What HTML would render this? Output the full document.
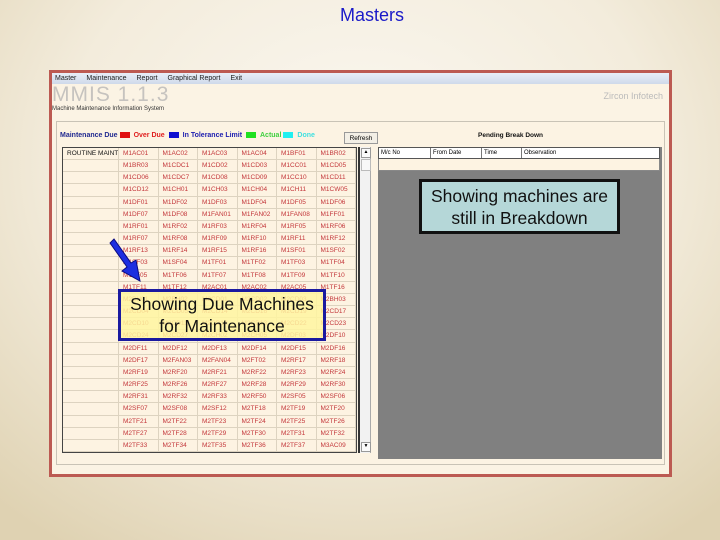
<!DOCTYPE html>
<html><head><meta charset="utf-8"><style>
*{margin:0;padding:0;box-sizing:border-box}
body{width:720px;height:540px;overflow:hidden;position:relative;font-family:"Liberation Sans",sans-serif;
background:radial-gradient(ellipse 75% 85% at 50% 30%,#fbf8f1 0%,#f3ecdc 55%,#dfd2b2 100%),#e6dcc0}
.abs{position:absolute}
#title{left:0;width:744px;top:5px;text-align:center;color:#1a1ac8;font-size:18px}
#frame{left:49px;top:70px;width:623px;height:407px;border:3px solid #bc5a52;background:#fbf3e4}
#menu{left:0;top:0;width:617px;height:11px;background:linear-gradient(#e8eef8,#cfd9ea);font-size:7px;color:#222;line-height:11px;padding-left:3px}
#menu span{margin-right:10px}
#mmis{left:0;top:10px;font-size:21px;color:#c6c3bf;letter-spacing:1px}
#sub{left:0;top:33px;font-size:6px;color:#333}
#zircon{right:6px;top:18px;font-size:9px;color:#bbb}
#panel{left:4px;top:48px;width:609px;height:344px;border:1px solid #c9c3b6;background:#fcf3e3}
#legend{left:8px;top:59px;font-size:7px;font-weight:bold;white-space:nowrap}
.sw{display:inline-block;width:10px;height:6px;vertical-align:middle;margin:0 4px 0 2px}
#refresh{left:292px;top:59px;width:34px;height:12px;border:1px solid #999;background:#f3efe6;font-size:6.5px;text-align:center;line-height:11px}
#grid{left:10px;top:74px;width:295px;height:306px;border:1px solid #444;display:grid;grid-template-rows:repeat(25,1fr);grid-template-columns:56px repeat(6,1fr);background:#fdf3e2}
#grid div{border-right:1px solid #ddd3c0;border-bottom:1px solid #ddd3c0;font-size:6.5px;color:#c3363a;padding-left:4px;line-height:11px;white-space:nowrap;overflow:hidden}
#grid div.h{color:#111}
#scroll{left:306px;top:74px;width:13px;height:306px;background:#f2f2f2;border-left:2px solid #333;border-right:1px solid #aaa}
#right{left:326px;top:74px;width:284px;height:312px;background:#808080}
#rh{left:0;top:0;width:282px;height:12px;background:#fff;border:1px solid #555;font-size:6px;line-height:11px;display:flex}
#rh span{border-right:1px solid #777;padding-left:2px}
#rb{left:0;top:12px;width:282px;height:12px;background:#fdf3e2;border:1px solid #888;border-top:none}
#pend{left:426px;top:59px;font-size:6.5px;font-weight:bold;color:#111}
.call{text-align:center;font-size:17.5px;color:#111;line-height:22px;white-space:nowrap}
</style></head><body>
<div id="title" class="abs">Masters</div>
<div id="frame" class="abs">
 <div id="menu" class="abs"><span>Master</span><span>Maintenance</span><span>Report</span><span>Graphical Report</span><span>Exit</span></div>
 <div id="mmis" class="abs">MMIS 1.1.3</div>
 <div id="sub" class="abs">Machine Maintenance Information System</div>
 <div id="zircon" class="abs">Zircon Infotech</div>
 <div id="panel" class="abs"></div>
 <div id="legend" class="abs"><span style="color:#222a90">Maintenance Due</span><span class="sw" style="background:#e01010"></span><span style="color:#e02020">Over Due</span> <span class="sw" style="background:#1010d0"></span><span style="color:#2020b0">In Tolerance Limit</span> <span class="sw" style="background:#20e020"></span><span style="color:#40d040">Actual</span><span class="sw" style="background:#20f0f0"></span><span style="color:#40e0e0">Done</span></div>
 <div id="refresh" class="abs">Refresh</div>
 <div id="pend" class="abs">Pending Break Down</div>
 <div id="grid" class="abs">
<div class="h">ROUTINE MAINT</div><div>M1AC01</div><div>M1AC02</div><div>M1AC03</div><div>M1AC04</div><div>M1BF01</div><div>M1BR02</div>
<div></div><div>M1BR03</div><div>M1CDC1</div><div>M1CD02</div><div>M1CD03</div><div>M1CC01</div><div>M1CD05</div>
<div></div><div>M1CD06</div><div>M1CDC7</div><div>M1CD08</div><div>M1CD09</div><div>M1CC10</div><div>M1CD11</div>
<div></div><div>M1CD12</div><div>M1CH01</div><div>M1CH03</div><div>M1CH04</div><div>M1CH11</div><div>M1CW05</div>
<div></div><div>M1DF01</div><div>M1DF02</div><div>M1DF03</div><div>M1DF04</div><div>M1DF05</div><div>M1DF06</div>
<div></div><div>M1DF07</div><div>M1DF08</div><div>M1FAN01</div><div>M1FAN02</div><div>M1FAN08</div><div>M1FF01</div>
<div></div><div>M1RF01</div><div>M1RF02</div><div>M1RF03</div><div>M1RF04</div><div>M1RF05</div><div>M1RF06</div>
<div></div><div>M1RF07</div><div>M1RF08</div><div>M1RF09</div><div>M1RF10</div><div>M1RF11</div><div>M1RF12</div>
<div></div><div>M1RF13</div><div>M1RF14</div><div>M1RF15</div><div>M1RF16</div><div>M1SF01</div><div>M1SF02</div>
<div></div><div>M1SF03</div><div>M1SF04</div><div>M1TF01</div><div>M1TF02</div><div>M1TF03</div><div>M1TF04</div>
<div></div><div>M1TF05</div><div>M1TF06</div><div>M1TF07</div><div>M1TF08</div><div>M1TF09</div><div>M1TF10</div>
<div></div><div>M1TF11</div><div>M1TF12</div><div>M2AC01</div><div>M2AC02</div><div>M2AC05</div><div>M1TF16</div>
<div></div><div>M2BH01</div><div>M2BH02</div><div>M2CD01</div><div>M2CD02</div><div>M2CD03</div><div>M2BH03</div>
<div></div><div>M2CD04</div><div>M2CD05</div><div>M2CD14</div><div>M2CD16</div><div>M2CD19</div><div>M2CD17</div>
<div></div><div>M2CD10</div><div>M2CD11</div><div>M2CD12</div><div>M2CD13</div><div>M2CD22</div><div>M2CD23</div>
<div></div><div>M2CD24</div><div>M2CD27</div><div>M2CH02</div><div>M2CH05</div><div>M2DF03</div><div>M2DF10</div>
<div></div><div>M2DF11</div><div>M2DF12</div><div>M2DF13</div><div>M2DF14</div><div>M2DF15</div><div>M2DF16</div>
<div></div><div>M2DF17</div><div>M2FAN03</div><div>M2FAN04</div><div>M2FT02</div><div>M2RF17</div><div>M2RF18</div>
<div></div><div>M2RF19</div><div>M2RF20</div><div>M2RF21</div><div>M2RF22</div><div>M2RF23</div><div>M2RF24</div>
<div></div><div>M2RF25</div><div>M2RF26</div><div>M2RF27</div><div>M2RF28</div><div>M2RF29</div><div>M2RF30</div>
<div></div><div>M2RF31</div><div>M2RF32</div><div>M2RF33</div><div>M2RF50</div><div>M2SF05</div><div>M2SF06</div>
<div></div><div>M2SF07</div><div>M2SF08</div><div>M2SF12</div><div>M2TF18</div><div>M2TF19</div><div>M2TF20</div>
<div></div><div>M2TF21</div><div>M2TF22</div><div>M2TF23</div><div>M2TF24</div><div>M2TF25</div><div>M2TF26</div>
<div></div><div>M2TF27</div><div>M2TF28</div><div>M2TF29</div><div>M2TF30</div><div>M2TF31</div><div>M2TF32</div>
<div></div><div>M2TF33</div><div>M2TF34</div><div>M2TF35</div><div>M2TF36</div><div>M2TF37</div><div>M3AC09</div>
 </div>
 <div id="scroll" class="abs">
  <div class="abs" style="left:1px;top:1px;width:10px;height:10px;border:1px solid #999;background:#fafafa;font-size:5px;text-align:center">▲</div>
  <div class="abs" style="left:1px;top:12px;width:10px;height:12px;border:1px solid #bbb;background:#f8f8f8"></div>
  <div class="abs" style="left:1px;bottom:1px;width:10px;height:10px;border:1px solid #999;background:#fafafa;font-size:5px;text-align:center">▼</div>
 </div>
 <div id="right" class="abs">
  <div id="rh" class="abs"><span style="width:52px">M/c No</span><span style="width:51px">From Date</span><span style="width:40px">Time</span><span style="flex:1;border:none">Observation</span></div>
  <div id="rb" class="abs"></div>
 </div>
</div>
<div class="abs call" style="left:419px;top:179px;width:201px;height:55px;background:#b5d7d8;border:3px solid #111;padding-top:3px">Showing machines are<br>still in Breakdown</div>
<div class="abs call" style="left:118px;top:289px;width:208px;height:52px;background:rgba(255,245,160,0.85);border:3px solid #1a1aa0;padding-top:1px">Showing Due Machines<br>for Maintenance</div>
<svg class="abs" style="left:100px;top:235px" width="50" height="55" viewBox="0 0 50 55">
 <path d="M10 8 L27 32 L22 36 L40 46 L36 25 L31 28 L14 4 Z" fill="#1c2ee0" stroke="#0a0a80" stroke-width="1"/>
</svg>
</body></html>
